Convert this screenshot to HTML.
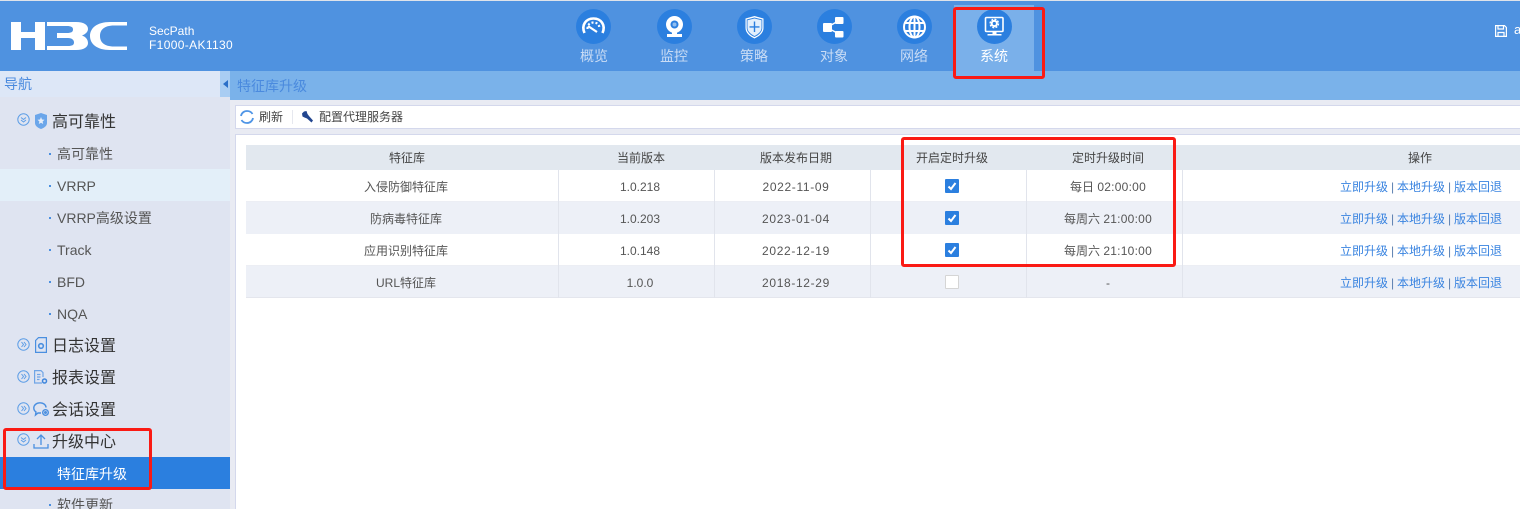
<!DOCTYPE html>
<html lang="zh"><head><meta charset="utf-8"><title>特征库升级</title>
<style>
*{box-sizing:border-box}
html,body{margin:0;padding:0;width:1520px;height:509px;overflow:hidden}
body{position:relative;background:#e9ebf3;font-family:"Liberation Sans","Noto Sans CJK SC",sans-serif;font-size:12px;color:#555}
.a{position:absolute;white-space:nowrap}
svg{position:absolute;display:block;overflow:visible}
.nav{top:48px;width:60px;text-align:center;font-size:14px;line-height:16px;color:#c9dcf5}
.circ{top:9px;width:35px;height:35px;border-radius:50%;background:#2b7fdf}
.l1{left:52px;font-size:16px;line-height:20px;color:#333}
.l2{left:57px;font-size:14px;line-height:18px;color:#555}
.dot{left:49px;width:2px;height:2px;background:#4a8fe0}
.band{left:246px;width:1274px;height:32px}
.sep{width:1px;top:170px;height:128px;background:#e1e4ec}
.th{top:150px;height:16px;line-height:16px;color:#444;text-align:center}
.td{height:16px;line-height:16px;color:#555;text-align:center}
.td b{font-weight:400;font-size:12px;letter-spacing:.65px}
.td u{text-decoration:none;font-size:12px;letter-spacing:.25px}
.ops{left:1340px;height:16px;line-height:16px;color:#3a84e0;word-spacing:-.4px}
.ops i{font-style:normal;color:#5a7fb0}
.cb{left:945px;width:14px;height:14px;background:#2b7fdf;border-radius:1px}
.red{border:3px solid #fa1a14;border-radius:3px;background:transparent}
</style></head><body>

<div class="a" style="left:0;top:0;width:1520px;height:1px;background:#dfe3ea"></div>
<div class="a" style="left:0;top:1px;width:1520px;height:70px;background:#4f92e0"></div>
<div class="a" style="left:954px;top:5px;width:80px;height:66px;background:#7ab0ea"></div>

<svg style="left:10px;top:22px" width="118" height="28" viewBox="0 0 118 28">
<path fill="#fff" d="M1 0H11V10H25V0H35V28H25V16H11V28H1Z"/>
<path fill="#fff" d="M37 0H66C74 0 78 3 78 7C78 10 75 12.500 72 13.500C75 14.500 78 17 78 21C78 25 74 28 66 28H37V24H58C62 24 64 23 64 20.500C64 18 62 16 58 16H47V11H57C61 11 63 10 63 7.500C63 5 61 4 57 4H37Z"/>
<path fill="#fff" d="M117 0V3.500H104C94 3.500 90 8 90 14C90 20 94 24.500 104 24.500H117V28H100C87 28 80 22 80 14C80 6 87 0 100 0Z"/>
</svg>
<div class="a" style="left:149px;top:24px;font-size:12px;line-height:15px;color:#fff">SecPath</div>
<div class="a" style="left:149px;top:38px;font-size:12px;line-height:15px;color:#fff;letter-spacing:.35px">F1000-AK1130</div>

<div class="a circ" style="left:576px"></div>
<svg style="left:576px;top:9px" width="35" height="35" viewBox="0 0 35 35" fill="none" stroke="#fff">
<path stroke-width="2.600" d="M8.500 24C5 16 10 9.500 17.500 9.500C25 9.500 30 16 26.500 24"/>
<path stroke-width="2.200" stroke-dasharray="2 2" d="M11.500 20C11.500 15.500 14 13.500 17.500 13.500C21 13.500 23.500 15.500 23.500 20"/>
<path stroke-width="2.200" d="M12 17L21 23"/></svg>
<div class="a nav" style="left:564px">概览</div>

<div class="a circ" style="left:657px"></div>
<svg style="left:657px;top:9px" width="35" height="35" viewBox="0 0 35 35">
<circle cx="17.500" cy="15.500" r="8.500" fill="#fff"/><circle cx="17.500" cy="15.500" r="4" fill="#2b7fdf"/><circle cx="17.500" cy="15.500" r="2" fill="#8fbdf0"/>
<path fill="#fff" d="M15 23H20V25H25V28H10V25H15Z"/></svg>
<div class="a nav" style="left:644px">监控</div>

<div class="a circ" style="left:737px"></div>
<svg style="left:737px;top:9px" width="35" height="35" viewBox="0 0 35 35">
<path fill="#fff" d="M17.500 7L26.500 9.500V19C26.500 24 22 27.500 17.500 29.500C13 27.500 8.500 24 8.500 19V9.500Z"/>
<path fill="#2b7fdf" d="M17.500 8.500L25.300 10.500V19C25.300 23 21.500 26.300 17.500 28C13.500 26.300 9.700 23 9.700 19V10.500Z"/>
<path fill="#e3effc" d="M17.500 9.500L24.500 11.300V19C24.500 22.500 21 25.300 17.500 27C14 25.300 10.500 22.500 10.500 19V11.300Z"/>
<path fill="#2b7fdf" d="M16.800 12.500H18.200V17.200H22.500V18.600H18.200V23H16.800V18.600H12.500V17.200H16.800Z"/></svg>
<div class="a nav" style="left:724px">策略</div>

<div class="a circ" style="left:817px"></div>
<svg style="left:817px;top:9px" width="35" height="35" viewBox="0 0 35 35">
<path stroke="#fff" stroke-width="1.400" fill="none" d="M22 11.500L10 18.500L22 25"/>
<rect x="6" y="14" width="9" height="9" rx="1" fill="#fff"/><rect x="18" y="8" width="8.500" height="7" rx="1" fill="#fff"/><rect x="18" y="22" width="8.500" height="6.500" rx="1" fill="#fff"/></svg>
<div class="a nav" style="left:804px">对象</div>

<div class="a circ" style="left:897px"></div>
<svg style="left:897px;top:9px" width="35" height="35" viewBox="0 0 35 35" fill="none" stroke="#fff" stroke-width="2">
<circle cx="17.500" cy="18" r="10.500"/><ellipse cx="17.500" cy="18" rx="5" ry="10.500"/>
<path d="M17.500 7.500V28.500M8.500 14H26.500M8.500 22H26.500"/></svg>
<div class="a nav" style="left:884px">网络</div>

<div class="a circ" style="left:977px"></div>
<svg style="left:977px;top:9px" width="35" height="35" viewBox="0 0 35 35">
<rect x="8.500" y="8.500" width="17.500" height="14" rx="1" fill="none" stroke="#fff" stroke-width="1.600"/>
<circle cx="17.300" cy="14.500" r="2.600" fill="none" stroke="#fff" stroke-width="2"/>
<circle cx="17.300" cy="14.500" r="4.200" fill="none" stroke="#fff" stroke-width="1.400" stroke-dasharray="2 1.300"/>
<path fill="#fff" d="M15.500 23H19.500V25H24.500V26.500H10.500V25H15.500Z"/></svg>
<div class="a nav" style="left:964px;color:#fff">系统</div>

<svg style="left:1495px;top:25px" width="12" height="12" viewBox="0 0 12 12" fill="none" stroke="#fff" stroke-width="1.200">
<path d="M.6.6H9.500L11.400 2.500V11.400H.6Z"/><path d="M3 .6V4H8.500V.6M3 11.400V7.500H9V11.400"/></svg>
<div class="a" style="left:1514px;top:22px;font-size:13px;line-height:16px;color:#fff">a</div>

<!-- sidebar -->
<div class="a" style="left:0;top:71px;width:230px;height:438px;background:#dfe4f1"></div>
<div class="a" style="left:0;top:71px;width:230px;height:26px;background:#dde7f7"></div>
<div class="a" style="left:4px;top:76px;font-size:14px;line-height:17px;color:#4a8ade">导航</div>
<div class="a" style="left:220px;top:71px;width:10px;height:26px;background:#a9cdf3"></div>
<svg style="left:223px;top:80px" width="5" height="8" viewBox="0 0 5 8"><path d="M5 0V8L0 4Z" fill="#2b6fc8"/></svg>

<svg style="left:17px;top:113px" width="13" height="13" viewBox="0 0 13 13" fill="none" stroke="#5e9ee6"><circle cx="6.500" cy="6.500" r="5.700"/><path d="M4 4.500L6.500 6.500L9 4.500M4 7L6.500 9L9 7"/></svg>
<svg style="left:35px;top:113px" width="12" height="16" viewBox="0 0 12 16"><path d="M6 0L12 2V10C12 13 9 15 6 16C3 15 0 13 0 10V2Z" fill="#6ba6ea"/><path d="M6 4L7 6.500L9.500 6.800L7.600 8.500L8.200 11L6 9.800L3.800 11L4.400 8.500L2.500 6.800L5 6.500Z" fill="#e6eef9"/></svg>
<div class="a l1" style="top:113px">高可靠性</div>

<div class="a" style="left:0;top:169px;width:230px;height:32px;background:#e3eff9"></div>
<div class="a dot" style="top:153px"></div><div class="a l2" style="top:145px">高可靠性</div>
<div class="a dot" style="top:185px"></div><div class="a l2" style="top:177px">VRRP</div>
<div class="a dot" style="top:217px"></div><div class="a l2" style="top:209px">VRRP高级设置</div>
<div class="a dot" style="top:249px"></div><div class="a l2" style="top:241px">Track</div>
<div class="a dot" style="top:281px"></div><div class="a l2" style="top:273px">BFD</div>
<div class="a dot" style="top:313px"></div><div class="a l2" style="top:305px">NQA</div>

<svg style="left:17px;top:338px" width="13" height="13" viewBox="0 0 13 13" fill="none" stroke="#5e9ee6"><circle cx="6.500" cy="6.500" r="5.700"/><path d="M4.500 4L6.500 6.500L4.500 9M7 4L9 6.500L7 9"/></svg>
<svg style="left:35px;top:337px" width="12" height="16" viewBox="0 0 12 16" fill="none" stroke="#4a8fe0" stroke-width="1.200"><path d="M.6 3.500L3.500.6H11.400V15.400H.6Z"/><circle cx="6" cy="9" r="2.300" stroke-width="1.600"/></svg>
<div class="a l1" style="top:337px">日志设置</div>

<svg style="left:17px;top:370px" width="13" height="13" viewBox="0 0 13 13" fill="none" stroke="#5e9ee6"><circle cx="6.500" cy="6.500" r="5.700"/><path d="M4.500 4L6.500 6.500L4.500 9M7 4L9 6.500L7 9"/></svg>
<svg style="left:34px;top:370px" width="14" height="15" viewBox="0 0 14 15" fill="none" stroke="#6fa5e6" stroke-width="1.200"><path d="M8 13H.6V.6H7L9 2.600V7M3 4.500H6.500M3 7H6.500M3 9.500H5.500"/><circle cx="10.500" cy="11" r="2" stroke="#3f86dc" stroke-width="1.500"/></svg>
<div class="a l1" style="top:369px">报表设置</div>

<svg style="left:17px;top:402px" width="13" height="13" viewBox="0 0 13 13" fill="none" stroke="#5e9ee6"><circle cx="6.500" cy="6.500" r="5.700"/><path d="M4.500 4L6.500 6.500L4.500 9M7 4L9 6.500L7 9"/></svg>
<svg style="left:33px;top:402px" width="17" height="15" viewBox="0 0 17 15" fill="none" stroke="#4a8fe0" stroke-width="1.400"><path d="M8 11H5L2.500 13L3 10C1.500 9 .8 7.500 .8 6C.8 3 3.500 .8 7 .8C10.500 .8 13 3 13 5.500"/><circle cx="12.500" cy="10.500" r="2.800"/><circle cx="12.500" cy="10.500" r=".8"/></svg>
<div class="a l1" style="top:401px">会话设置</div>

<svg style="left:17px;top:433px" width="13" height="13" viewBox="0 0 13 13" fill="none" stroke="#5e9ee6"><circle cx="6.500" cy="6.500" r="5.700"/><path d="M4 4.500L6.500 6.500L9 4.500M4 7L6.500 9L9 7"/></svg>
<svg style="left:33px;top:434px" width="16" height="15" viewBox="0 0 16 15" fill="none" stroke="#4a8fe0" stroke-width="1.300"><path d="M8 11V1M4 5L8 1L12 5M1 10V14H15V10"/></svg>
<div class="a l1" style="top:433px">升级中心</div>

<div class="a" style="left:0;top:457px;width:230px;height:32px;background:#2b7fdf"></div>
<div class="a" style="left:57px;top:465px;font-size:14px;line-height:18px;color:#fff">特征库升级</div>
<div class="a dot" style="top:504px"></div><div class="a l2" style="top:496px">软件更新</div>

<!-- main -->
<div class="a" style="left:230px;top:71px;width:1290px;height:29px;background:#7ab2ea"></div>
<div class="a" style="left:237px;top:77px;font-size:14px;line-height:18px;color:#4a8ade">特征库升级</div>

<div class="a" style="left:235px;top:105px;width:1285px;height:24px;background:#fff;border:1px solid #d4d8ec;border-right:0"></div>
<svg style="left:240px;top:110px" width="14" height="14" viewBox="0 0 14 14" fill="none" stroke="#4f95e6" stroke-width="1.800"><path d="M1 6C1.500 3 4 1 7 1C9.500 1 11.500 2.200 12.500 4"/><path d="M13 8C12.500 11 10 13 7 13C4.500 13 2.500 11.800 1.500 10"/></svg>
<div class="a" style="left:259px;top:109px;line-height:16px;color:#444">刷新</div>
<div class="a" style="left:292px;top:110px;width:1px;height:14px;background:#e6e8ef"></div>
<svg style="left:302px;top:111px" width="11" height="12" viewBox="0 0 11 12"><path d="M0 2.500L2 .5L4.500 0L5.500 3L7 5L11 9.500L9.500 11.500L5 7.500L2.500 6.500L.5 5.500Z" fill="#23468f"/></svg>
<div class="a" style="left:319px;top:109px;line-height:16px;color:#444">配置代理服务器</div>

<div class="a" style="left:235px;top:134px;width:1285px;height:375px;background:#fff;border:1px solid #d4d8ec;border-width:1px 0 0 1px"></div>

<div class="a" style="left:246px;top:145px;width:1274px;height:25px;background:#e2e8ef"></div>
<div class="a band" style="top:170px;background:#fff;border-bottom:1px solid #eceef4"></div>
<div class="a band" style="top:202px;background:#edf0f7"></div>
<div class="a band" style="top:234px;background:#fff;border-bottom:1px solid #eceef4"></div>
<div class="a band" style="top:266px;background:#edf0f7;border-bottom:1px solid #e4e6ed"></div>
<div class="a sep" style="left:558px"></div><div class="a sep" style="left:714px"></div><div class="a sep" style="left:870px"></div><div class="a sep" style="left:1026px"></div><div class="a sep" style="left:1182px"></div>

<div class="a th" style="left:246px;width:322px">特征库</div>
<div class="a th" style="left:558px;width:166px">当前版本</div>
<div class="a th" style="left:714px;width:164px">版本发布日期</div>
<div class="a th" style="left:870px;width:164px">开启定时升级</div>
<div class="a th" style="left:1026px;width:164px">定时升级时间</div>
<div class="a th" style="left:1182px;width:476px">操作</div>

<div class="a td" style="top:179px;left:246px;width:320px">入侵防御特征库</div>
<div class="a td" style="top:179px;left:558px;width:164px">1.0.218</div>
<div class="a td" style="top:179px;left:714px;width:164px"><b>2022-11-09</b></div>
<div class="a td" style="top:179px;left:1026px;width:164px">每日 <u>02:00:00</u></div>
<div class="a ops" style="top:179px">立即升级 <i>|</i> 本地升级 <i>|</i> 版本回退</div>

<div class="a td" style="top:211px;left:246px;width:320px">防病毒特征库</div>
<div class="a td" style="top:211px;left:558px;width:164px">1.0.203</div>
<div class="a td" style="top:211px;left:714px;width:164px"><b>2023-01-04</b></div>
<div class="a td" style="top:211px;left:1026px;width:164px">每周六 <u>21:00:00</u></div>
<div class="a ops" style="top:211px">立即升级 <i>|</i> 本地升级 <i>|</i> 版本回退</div>

<div class="a td" style="top:243px;left:246px;width:320px">应用识别特征库</div>
<div class="a td" style="top:243px;left:558px;width:164px">1.0.148</div>
<div class="a td" style="top:243px;left:714px;width:164px"><b>2022-12-19</b></div>
<div class="a td" style="top:243px;left:1026px;width:164px">每周六 <u>21:10:00</u></div>
<div class="a ops" style="top:243px">立即升级 <i>|</i> 本地升级 <i>|</i> 版本回退</div>

<div class="a td" style="top:275px;left:246px;width:320px">URL特征库</div>
<div class="a td" style="top:275px;left:558px;width:164px">1.0.0</div>
<div class="a td" style="top:275px;left:714px;width:164px"><b>2018-12-29</b></div>
<div class="a td" style="top:275px;left:1026px;width:164px">-</div>
<div class="a ops" style="top:275px">立即升级 <i>|</i> 本地升级 <i>|</i> 版本回退</div>

<div class="a cb" style="top:179px"></div>
<svg style="left:945px;top:179px" width="14" height="14" viewBox="0 0 14 14"><path d="M3.500 7.500L6 10L10.500 4" fill="none" stroke="#fff" stroke-width="2"/></svg>
<div class="a cb" style="top:211px"></div>
<svg style="left:945px;top:211px" width="14" height="14" viewBox="0 0 14 14"><path d="M3.500 7.500L6 10L10.500 4" fill="none" stroke="#fff" stroke-width="2"/></svg>
<div class="a cb" style="top:243px"></div>
<svg style="left:945px;top:243px" width="14" height="14" viewBox="0 0 14 14"><path d="M3.500 7.500L6 10L10.500 4" fill="none" stroke="#fff" stroke-width="2"/></svg>
<div class="a cb" style="top:275px;background:#fff;border:1px solid #d5d5d5"></div>

<!-- red annotations -->
<div class="a red" style="left:953px;top:7px;width:92px;height:72px"></div>
<div class="a red" style="left:901px;top:137px;width:275px;height:130px"></div>
<div class="a red" style="left:3px;top:428px;width:149px;height:62px"></div>
</body></html>
